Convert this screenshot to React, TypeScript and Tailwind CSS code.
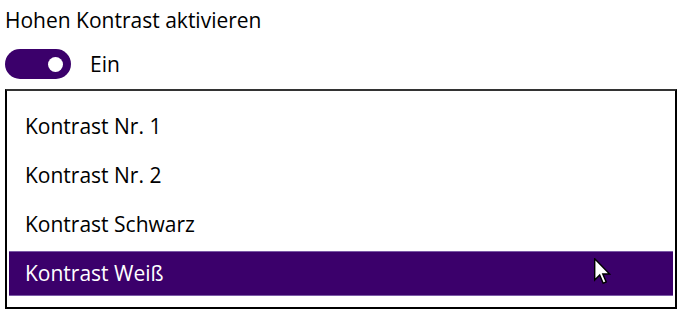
import React from "react"

const ITEMS = ["Kontrast Nr. 1", "Kontrast Nr. 2", "Kontrast Schwarz", "Kontrast Weiß"]

function Cursor() {
  return (
    <svg width="17" height="27" viewBox="0 0 12 19" className="absolute left-[585px] top-[6px]">
      <path
        d="M0.5 0.5 L0.5 15.5 L4 12 L6.5 17.8 L8.6 16.9 L6.2 11.3 L11 11.3 Z"
        fill="#fff"
        stroke="#000"
        strokeWidth="1"
        strokeLinejoin="miter"
      />
    </svg>
  )
}

export default function App() {
  const selected = 3
  return (
    <div className="w-[682px] h-[319px] bg-white px-[5px] pt-[6px] text-black font-['Open_Sans',_'Noto_Sans',_sans-serif] overflow-hidden">
      <div className="text-[21px] leading-[28px]">Hohen Kontrast aktivieren</div>

      {/* Toggle */}
      <div className="mt-[15px] flex items-center gap-[19px]">
        <div className="w-[66px] h-[30px] rounded-full bg-[#3b006b] flex items-center justify-end pr-[8px]">
          <div className="w-[15px] h-[15px] rounded-full bg-white" />
        </div>
        <span className="text-[21px] leading-[28px]">Ein</span>
      </div>

      {/* List */}
      <div className="mt-[10px] w-[672px] h-[220px] border-2 border-black border-t-[#333] px-[2px] pt-[13px] flex flex-col gap-[4px]">
        {ITEMS.map((item, i) => (
          <div
            key={item}
            className={
              i === selected
                ? "relative h-[45px] flex items-center pl-[16px] bg-[#3b006b] text-white border-y border-[#7b5aa6] text-[21px]"
                : "h-[45px] flex items-center pl-[16px] text-[21px]"
            }
          >
            {item}
            {i === selected && <Cursor />}
          </div>
        ))}
      </div>
    </div>
  )
}
